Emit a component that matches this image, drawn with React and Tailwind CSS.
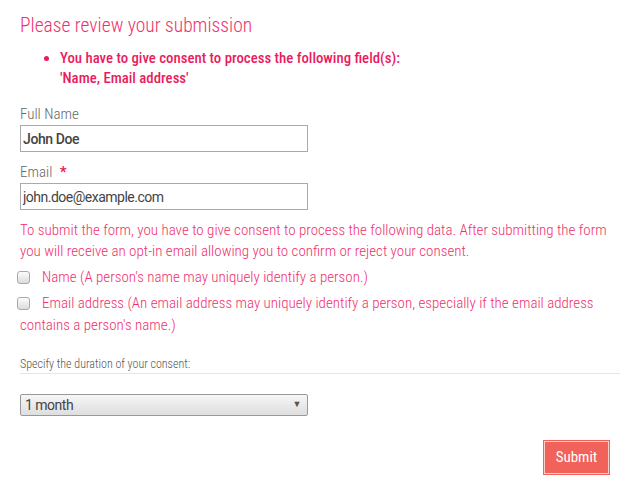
export default function App() {
  const box =
    "h-[13px] w-[13px] shrink-0 appearance-none rounded-[3px] border border-[#a9a9a9] bg-gradient-to-b from-[#fcfcfc] to-[#dcdcdc]";

  return (
    <div className="min-h-[494px] bg-white pl-5 pr-[15px] pt-3 font-['Roboto',sans-serif] text-[15px] font-light [font-stretch:75%]">
      <h2 className="text-[19.5px] font-light leading-[28px] text-[#f0306d]">Please review your submission</h2>
      <ul className="mt-2 list-disc pl-[40px] text-[14.8px] font-medium leading-[20px] text-[#ea1c5e] marker:text-[#ea1c5e]">
        <li>
          You have to give consent to process the following field(s):
          <br />
          'Name, Email address'
        </li>
      </ul>

      <form className="mt-4" onSubmit={(e) => e.preventDefault()}>
        <label className="block leading-[20px] text-[#666]">Full Name</label>
        <input
          type="text"
          defaultValue="John Doe"
          className="mt-[1px] block h-[27px] w-[288px] border border-[#aaa] px-[2px] text-[14px] font-medium tracking-[-0.4px] text-[#444] [font-stretch:100%]"
        />

        <label className="mt-[10px] block leading-[20px] text-[#666]">
          Email <span className="ml-1 font-bold text-[#ea1c5e]">*</span>
        </label>
        <input
          type="text"
          defaultValue="john.doe@example.com"
          className="mt-[1px] block h-[27px] w-[288px] border border-[#aaa] px-[2px] text-[14px] font-normal tracking-[-0.5px] text-[#444] [font-stretch:100%]"
        />

        <p className="mt-[10px] leading-[21px] text-[#f0306d]">
          To submit the form, you have to give consent to process the following data. After submitting the form you will receive an opt-in email allowing you to confirm or reject your consent.
        </p>

        <div className="mt-[2px] leading-[22px] text-[#f0306d]">
          <label className="flex items-center gap-3 py-[2px]">
            <input type="checkbox" className={`ml-[-3px] ${box}`} />
            <span>Name (A person's name may uniquely identify a person.)</span>
          </label>
          <label className="block py-[2px]">
            <input type="checkbox" className={`ml-[-3px] mr-3 inline-block align-[-2px] ${box}`} />
            Email address (An email address may uniquely identify a person, especially if the email address contains a person's name.)
          </label>
        </div>

        <div className="mt-[19px] border-b border-[#e5e5e5] pb-[1px] text-[12px] leading-[15px] text-[#555]">
          Specify the duration of your consent:
        </div>

        <div className="mt-[20px] flex h-[22px] w-[288px] items-center justify-between rounded-[2px] border border-[#999] bg-gradient-to-b from-[#f6f6f6] to-[#dedede] pl-[4px] pr-[6px] text-[14px] font-normal tracking-[-0.5px] text-[#444] [font-stretch:100%]">
          <span>1 month</span>
          <span className="text-[9px] text-[#555]">▼</span>
        </div>

        <div className="mt-6 flex justify-end pr-[10px]">
          <button className="h-[35px] w-[67px] bg-[#f0625a] text-[15px] font-normal text-white outline outline-1 -outline-offset-2 outline-[#ffd0c8]">
            Submit
          </button>
        </div>
      </form>
    </div>
  );
}
